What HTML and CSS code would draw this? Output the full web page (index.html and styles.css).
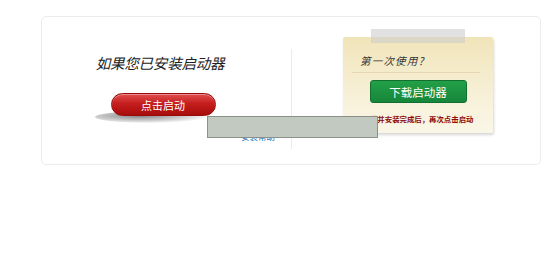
FILE: index.html
```html
<!DOCTYPE html>
<html lang="zh-CN">
<head>
<meta charset="utf-8">
<title>启动器</title>
<link rel="stylesheet" href="styles.css">
</head>
<body>
<div class="card">
  <div class="left">
    <h2 class="title">如果您已安装启动器</h2>
    <div class="btn-wrap">
      <div class="btn-shadow"></div>
      <a class="btn-red" href="#">点击启动</a>
    </div>
    <div class="link-row"><span class="dot">·</span><a class="help" href="#">安装帮助</a></div>
  </div>
  <div class="divider"></div>
  <div class="right">
    <div class="note">
      <div class="tape"></div>
      <div class="note-title">第一次使用?</div>
      <div class="rule"></div>
      <a class="btn-green" href="#">下载启动器</a>
      <p class="tip">下载并安装完成后，再次点击启动</p>
    </div>
  </div>
</div>
<div class="overlay"></div>
</body>
</html>
```
FILE: styles.css
```css
html, body {
  margin: 0;
  padding: 0;
  background: #fff;
  font-family: "Noto Sans CJK SC", "Noto Sans", sans-serif;
}
.card {
  box-sizing: border-box;
  margin: 16px 0 0 41px;
  width: 500px;
  height: 149px;
  border: 1px solid #ececec;
  border-radius: 5px;
  display: flex;
}
.left {
  width: 249px;
  display: flex;
  flex-direction: column;
  align-items: center;
  padding-top: 37px;
  padding-right: 7px;
  box-sizing: border-box;
}
.title {
  margin: 0 0 0 -6px;
  font-size: 14.5px;
  line-height: 18px;
  font-weight: normal;
  font-style: italic;
  color: #222;
  letter-spacing: -0.2px;
}
.btn-wrap {
  position: relative;
  margin-top: 21px;
  width: 105px;
  height: 23px;
}
.btn-shadow {
  position: absolute;
  left: -16px;
  top: 18px;
  width: 112px;
  height: 12px;
  border-radius: 50%;
  background: radial-gradient(ellipse at 40% 40%, rgba(90,90,90,0.75), rgba(150,150,150,0.35) 55%, rgba(200,200,200,0) 75%);
}
.btn-red {
  position: relative;
  display: flex;
  align-items: center;
  justify-content: center;
  box-sizing: border-box;
  width: 105px;
  height: 23px;
  border-radius: 12px;
  background: linear-gradient(#e05050 0%, #c61e1e 45%, #a80c0c 100%);
  border: 1px solid #9a0a0a;
  color: #fff;
  font-size: 11px;
  text-decoration: none;
  box-shadow: inset 0 1px 0 rgba(255,255,255,0.35);
}
.link-row {
  align-self: flex-end;
  margin-top: 15px;
  margin-right: -7px;
  padding-right: 16px;
  display: flex;
  align-items: center;
  gap: 3px;
  font-size: 8.5px;
  line-height: 11px;
}
.dot { color: #999; }
.help {
  color: #2a6fb8;
  text-decoration: none;
}
.divider {
  width: 1px;
  height: 100px;
  margin-top: 32px;
  background: #ebebeb;
}
.right {
  flex: 1;
  padding: 20px 0 0 51px;
}
.note {
  position: relative;
  width: 150px;
  height: 96px;
  box-sizing: border-box;
  background: linear-gradient(#f0e4b9, #f8f2dc 70%, #faf6e6);
  border-radius: 2px;
  box-shadow: 1px 2px 3px rgba(0,0,0,0.16);
  display: flex;
  flex-direction: column;
  align-items: center;
  padding-top: 17px;
}
.tape {
  position: absolute;
  left: 28px;
  top: -8px;
  width: 94px;
  height: 14px;
  background: rgba(205,205,205,0.6);
}
.note-title {
  align-self: flex-start;
  margin-left: 17px;
  font-size: 10.5px;
  line-height: 14px;
  color: #333;
  letter-spacing: 1.2px;
  font-family: "Noto Sans CJK SC", serif;
  font-style: italic;
}
.rule {
  align-self: flex-start;
  margin: 4px 0 0 9px;
  width: 128px;
  height: 1px;
  background: #e3d8b2;
}
.btn-green {
  margin-top: 7px;
  box-sizing: border-box;
  width: 97px;
  height: 23px;
  display: flex;
  align-items: center;
  justify-content: center;
  border-radius: 3px;
  background: linear-gradient(#22a047, #17863a);
  border: 1px solid #136f2f;
  color: #fff;
  font-size: 11.5px;
  text-decoration: none;
}
.tip {
  margin: 11px 0 0;
  font-size: 7.4px;
  line-height: 10px;
  font-weight: bold;
  color: #8c0b0b;
  white-space: nowrap;
}
.overlay {
  position: absolute;
  left: 207px;
  top: 116px;
  width: 171px;
  height: 22px;
  box-sizing: border-box;
  background: #c2c9c0;
  border: 1px solid #8b908a;
}
```
